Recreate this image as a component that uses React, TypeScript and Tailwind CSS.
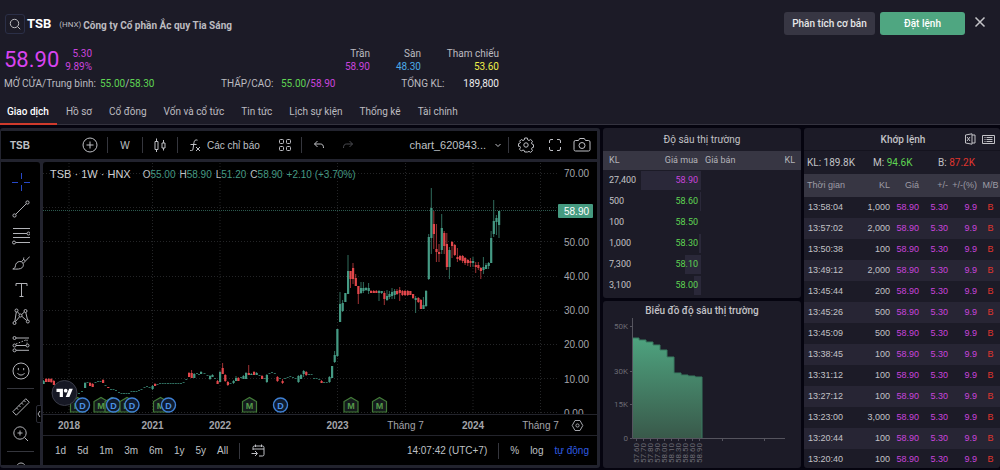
import type { ReactNode } from 'react';

interface Bid {
  volume: string;
  price: string;
  color: string;
  share: number;
}

interface Trade {
  time: string;
  volume: string;
}

// x, high, body top, body bottom, low, 1 = up / 0 = down (plot coordinates)
type Candle = [number, number, number, number, number, 0 | 1];

const tabs = ['Giao dịch', 'Hồ sơ', 'Cổ đông', 'Vốn và cổ tức', 'Tin tức', 'Lịch sự kiện', 'Thống kê', 'Tài chính'];
const ranges = ['1d', '5d', '1m', '3m', '6m', '1y', '5y', 'All'];

const bids: Bid[] = [
  { volume: '27,400', price: '58.90', color: 'text-[#c944dc]', share: 100 },
  { volume: '500', price: '58.60', color: 'text-[#5fd453]', share: 2 },
  { volume: '100', price: '58.50', color: 'text-[#5fd453]', share: 0 },
  { volume: '1,000', price: '58.30', color: 'text-[#5fd453]', share: 4 },
  { volume: '7,300', price: '58.10', color: 'text-[#5fd453]', share: 27 },
  { volume: '3,100', price: '58.00', color: 'text-[#5fd453]', share: 11 },
];

const trades: Trade[] = [
  { time: '13:58:04', volume: '1,000' },
  { time: '13:57:02', volume: '2,000' },
  { time: '13:50:38', volume: '100' },
  { time: '13:49:12', volume: '2,000' },
  { time: '13:45:44', volume: '200' },
  { time: '13:45:26', volume: '500' },
  { time: '13:45:09', volume: '500' },
  { time: '13:38:45', volume: '100' },
  { time: '13:31:12', volume: '100' },
  { time: '13:27:12', volume: '100' },
  { time: '13:23:00', volume: '3,000' },
  { time: '13:20:44', volume: '100' },
  { time: '13:20:40', volume: '100' },
];

const candles: Candle[] = [
  [43.5, 380, 381, 384, 384, 1], [46, 378, 379, 382, 382, 0], [48.6, 378, 379, 382, 382, 0], [51.2, 378, 379, 382, 383, 0],
  [53.8, 380, 381, 385, 385, 0], [85, 382, 383, 388, 388, 1], [90, 382, 383, 386, 386, 0], [92.6, 383, 384, 387, 387, 0],
  [103, 379, 380, 383, 383, 0], [108.2, 387, 387, 388, 388, 0], [152.5, 385, 386, 389, 390, 1], [155, 383, 384, 386, 386, 0],
  [189, 372, 373, 377, 377, 0], [191.6, 370, 373, 378, 378, 0], [194.2, 373, 374, 378, 378, 1], [201, 371, 372, 374, 374, 1],
  [210, 375, 376, 379, 380, 1], [212.4, 374, 375, 377, 377, 1], [217.5, 380, 381, 384, 384, 0], [220, 371, 372, 382, 382, 1],
  [222.6, 363, 368, 374, 374, 0], [225.2, 374, 375, 381, 382, 0], [227.8, 381, 382, 385, 386, 0], [233.5, 380, 381, 383, 384, 1],
  [236, 376, 378, 381, 381, 1], [238.3, 377, 378, 381, 381, 0], [243.4, 375, 376, 379, 379, 1], [246, 372, 373, 379, 379, 1],
  [248.7, 365, 373, 375, 375, 0], [251.3, 373, 374, 375, 375, 1], [254, 371, 372, 375, 375, 0], [256.6, 372, 373, 375, 375, 1],
  [262, 375, 376, 379, 379, 0], [266.8, 374, 375, 382, 383, 1], [277.4, 376, 377, 381, 382, 0], [282.5, 379, 381, 383, 384, 0],
  [298.4, 375, 376, 382, 383, 1], [301, 374, 375, 379, 379, 1], [303.6, 370, 371, 374, 377, 1], [306.2, 371, 372, 375, 376, 0],
  [321.5, 380, 381, 383, 383, 0], [329.4, 376, 377, 382, 383, 1], [332, 366, 366, 378, 378, 1], [334.6, 351, 355, 362, 363, 1],
  [337.3, 329, 329, 356, 357, 1], [340, 292, 304, 322, 322, 1], [342.6, 300, 303, 311, 312, 1], [345.3, 293, 293, 302, 302, 1],
  [348, 255, 271, 294, 294, 1], [350.5, 271, 271, 279, 288, 0], [353, 263, 268, 279, 284, 0], [355.7, 274, 278, 286, 286, 0],
  [358.3, 286, 286, 294, 304, 0], [361, 282, 288, 293, 294, 1], [363.4, 282, 288, 291, 293, 1], [366, 287, 288, 290, 291, 1],
  [368.6, 283, 288, 291, 294, 1], [371, 290, 291, 293, 293, 0], [373.7, 290, 291, 293, 293, 0], [376.3, 290, 291, 293, 293, 0],
  [379, 290, 291, 293, 301, 1], [381.6, 291, 291, 293, 294, 1], [384.3, 291, 293, 299, 305, 0], [387, 290, 296, 300, 301, 1],
  [389.4, 291, 294, 297, 299, 1], [392, 288, 292, 296, 299, 1], [394.6, 289, 291, 295, 299, 1], [397, 289, 291, 294, 295, 0],
  [399.7, 287, 290, 293, 301, 0], [402.4, 290, 291, 295, 296, 0], [405, 290, 291, 295, 296, 0], [407.7, 290, 291, 295, 296, 0],
  [410.3, 291, 291, 295, 295, 0], [413, 294, 294, 298, 299, 0], [415.6, 296, 298, 300, 313, 1], [418.3, 297, 298, 302, 303, 0],
  [420.8, 299, 300, 309, 309, 0], [423.4, 297, 305, 309, 309, 1], [426, 290, 291, 306, 307, 1], [428.7, 234, 237, 279, 280, 1],
  [431.3, 188, 208, 238, 254, 1], [433.8, 211, 224, 234, 249, 0], [436.4, 224, 249, 252, 262, 0], [439, 244, 252, 254, 262, 0],
  [441.7, 214, 228, 250, 254, 1], [444.2, 231, 233, 246, 254, 0], [446.8, 233, 244, 267, 270, 0], [449.4, 247, 250, 267, 279, 1],
  [452, 241, 242, 246, 258, 0], [454.7, 244, 245, 255, 256, 0], [457.4, 248, 257, 259, 262, 0], [460, 255, 256, 260, 261, 0],
  [462.6, 255, 256, 261, 263, 0], [465.1, 257, 258, 263, 265, 0], [467.8, 259, 260, 263, 266, 0], [470.4, 258, 261, 263, 267, 0],
  [473, 257, 261, 263, 267, 1], [475.7, 262, 265, 267, 273, 0], [478.3, 262, 265, 268, 270, 0], [480.8, 267, 268, 271, 279, 0],
  [483.4, 257, 267, 270, 274, 1], [486, 263, 265, 269, 269, 1], [488.6, 262, 263, 266, 269, 1], [491.1, 231, 238, 263, 263, 1],
  [493.7, 200, 221, 234, 237, 1], [496.4, 215, 218, 222, 235, 1], [499, 211, 211, 225, 238, 1],
];

// quiet weeks, drawn as short dashes
const quiet = [
  [79, 393], [82, 391], [87.5, 382], [95.5, 382], [98, 381], [100.5, 381], [105.5, 385], [111, 389], [113.5, 389], [116, 390],
  [119, 392], [121.5, 393], [124, 393], [126.5, 393], [129, 393], [131.5, 391], [134, 391], [136.5, 391], [139, 390], [141.5, 389],
  [144.5, 387], [147, 386], [149.5, 387], [157.5, 384], [160, 383], [162.7, 383], [165.3, 383], [168, 383], [170.6, 383],
  [173.2, 383], [175.8, 383], [178.4, 383], [181, 383], [183.6, 382], [186.3, 379], [197, 373], [199, 374], [204.5, 373],
  [207.5, 375], [215, 378], [230.5, 383], [241, 377], [259.5, 375], [264.5, 378], [269.5, 373], [272, 372], [274.8, 373],
  [280, 378], [285, 378], [287.7, 377], [290.3, 376], [293, 377], [295.6, 378], [309, 374], [311.6, 374], [314, 378],
  [316.6, 378], [319.3, 379], [324, 382], [326.7, 382],
];

const gridX = [69, 152.5, 220, 337.5, 405.5, 473, 540.5];
const gridY = [173, 207, 241.5, 276, 310, 344, 378.5, 412.5];
const priceLabels = ['70.00', '', '50.00', '40.00', '30.00', '20.00', '10.00', '0.00'];
const timeLabels = ['2018', '2021', '2022', '2023', 'Tháng 7', '2024', 'Tháng 7'];

const events: [string, number][] = [
  ['M', 77.5], ['D', 82.5], ['M', 101], ['M', 112], ['D', 113.5], ['M', 127], ['D', 132],
  ['M', 160.5], ['D', 168.5], ['M', 249.5], ['D', 280.5], ['M', 351], ['M', 379.5],
];

const depthSteps = [338, 340, 342, 345, 350, 357, 373, 375, 376, 377];
const depthPrices = ['57.60', '57.70', '57.80', '57.90', '58.00', '58.10', '58.30', '58.50', '58.60', '58.90'];

function Icon({ children, size = 18, className = '' }: { children: ReactNode; size?: number; className?: string }) {
  return (
    <svg width={size} height={size} viewBox={`0 0 ${size} ${size}`} fill="none" stroke="currentColor" strokeWidth="1" className={className} aria-hidden="true">
      {children}
    </svg>
  );
}

function Separator() {
  return <span className="h-4 w-px shrink-0 bg-[#35363d]" />;
}

function Header() {
  return (
    <header className="shrink-0 border-b border-[#34333f] bg-[#1c1b27] text-[10px] text-[#bcbcc0]">
      <div className="flex items-start pt-3 pr-[10px]">
        <div className="flex items-center pt-[2px] pl-[5px]">
          <button aria-label="Tìm kiếm" className="flex size-5 items-center justify-center rounded-[3px] border border-[#2b2f47]">
            <Icon size={12}>
              <circle cx="5.5" cy="5.5" r="4.2" />
              <path d="M8.6 8.6 11.2 11.2" />
            </Icon>
          </button>
          <h1 className="ml-[2px] text-[13px] leading-5 font-bold text-white">TSB</h1>
          <span className="mt-[2px] ml-2 text-[8px]">(HNX)</span>
          <span className="mt-[2px] ml-[2px] font-bold">Công ty Cổ phần Ắc quy Tia Sáng</span>
        </div>
        <div className="ml-auto flex items-start gap-[5px] font-medium text-white">
          <button className="h-[23px] w-[91px] rounded-[3px] bg-[#373643] text-[#e6e6e8]">Phân tích cơ bản</button>
          <button className="h-[23px] w-[85px] rounded-[3px] bg-[#4fa681]">Đặt lệnh</button>
          <button aria-label="Đóng" className="flex size-5 items-center justify-center text-[#c4c4c8]">
            <Icon size={12}>
              <path d="m1.5 1.5 9 9m0-9-9 9" strokeWidth="1.5" />
            </Icon>
          </button>
        </div>
      </div>

      <div className="mt-3 flex w-[499px] items-center pl-1">
        <span className="w-[56px] text-[22px] leading-[26px] text-[#d944f0]">58.90</span>
        <div className="w-8 text-right leading-[13px] text-[#c944dc]">
          <div>5.30</div>
          <div>9.89%</div>
        </div>
        <dl className="ml-auto flex text-right leading-[13px]">
          <div>
            <dt>Trần</dt>
            <dd className="text-[#c944dc]">58.90</dd>
          </div>
          <div className="w-[51px]">
            <dt>Sàn</dt>
            <dd className="text-[#4ba9e6]">48.30</dd>
          </div>
          <div className="w-[78px]">
            <dt>Tham chiếu</dt>
            <dd className="text-[#eeee48]">53.60</dd>
          </div>
        </dl>
      </div>

      <div className="mt-1 flex w-[499px] pl-1 leading-[13px]">
        <span className="w-24">MỞ CỬA/Trung bình:</span>
        <span className="w-[121px]">
          <span className="text-[#5fd453]">55.00</span>/<span className="text-[#5fd453]">58.30</span>
        </span>
        <span className="w-[60px]">THẤP/CAO:</span>
        <span>
          <span className="text-[#5fd453]">55.00</span>/<span className="text-[#c944dc]">58.90</span>
        </span>
        <span className="ml-auto w-[62px]">TỔNG KL:</span>
        <span className="text-right text-[#ececee]">189,800</span>
      </div>

      <nav className="mt-[9px] flex">
        {tabs.map((tab, i) => (
          <a
            key={tab}
            href="#"
            className={
              i === 0
                ? '-mb-px border-b-2 border-[#cf3a2c] pt-[6px] pr-2 pb-1 pl-[7px] leading-[14px] font-medium text-white'
                : 'pt-[6px] pr-2 pb-1 pl-[9px] leading-[14px]'
            }
          >
            {tab}
          </a>
        ))}
      </nav>
    </header>
  );
}

function ChartToolbar() {
  return (
    <div className="flex h-7 shrink-0 items-center bg-black text-[10px]">
      <button className="w-[71px] pl-[9px] text-left font-bold">TSB</button>
      <button aria-label="So sánh" className="flex w-[35px] justify-center">
        <Icon size={16}>
          <circle cx="8" cy="8" r="7" />
          <path d="M8 4.500v7M4.500 8h7" />
        </Icon>
      </button>
      <Separator />
      <button className="w-[34px] text-center">W</button>
      <Separator />
      <button aria-label="Kiểu nến" className="flex w-[34px] justify-center">
        <Icon size={14}>
          <path d="M2 3.500h3v8H2zM3.500 0.500v3M3.500 11.500v2.500M9 5h3v5H9zM10.500 2v3M10.500 10v2.500" />
        </Icon>
      </button>
      <Separator />
      <button className="flex w-[91px] items-center gap-[6px] pl-[11px]">
        <Icon size={12}>
          <path d="M8.500 1.200C6.500.3 5.300 1.500 5 3.500L4 10c-.3 1.800-1.300 2.300-3 1.500M1.500 5.500h6M7 8l4 4M11 8l-4 4" />
        </Icon>
        Các chỉ báo
      </button>
      <button aria-label="Mẫu" className="flex w-8 justify-center">
        <Icon size={14}>
          <rect x="1.500" y="1.500" width="4" height="4" rx="1" />
          <rect x="8.500" y="1.500" width="4" height="4" rx="1" />
          <rect x="1.500" y="8.500" width="4" height="4" rx="1" />
          <rect x="8.500" y="8.500" width="4" height="4" rx="1" />
        </Icon>
      </button>
      <Separator />
      <button aria-label="Hoàn tác" className="flex w-[34px] justify-center">
        <Icon size={12}>
          <path d="M4.500 2 1.500 5l3 3M1.500 5h6c2.200 0 3 1.500 3 4" />
        </Icon>
      </button>
      <button aria-label="Làm lại" className="flex w-6 justify-center text-[#4a4b50]">
        <Icon size={12}>
          <path d="m7.500 2 3 3-3 3M10.500 5h-6c-2.200 0-3 1.500-3 4" />
        </Icon>
      </button>
      <button className="mr-[6px] ml-auto flex items-center gap-2 text-[11px]">
        chart_620843...
        <Icon size={8}>
          <path d="m1.500 3 2.500 2.500L6.500 3" />
        </Icon>
      </button>
      <Separator />
      <button aria-label="Cài đặt" className="flex w-[34px] justify-center">
        <Icon size={16}>
          <path d="M6.700 1h2.600l.4 1.900 1.300.6 1.700-1 1.800 1.800-1 1.700.6 1.200 1.400.5v2.600l-1.400.4-.6 1.200 1 1.700-1.800 1.800-1.700-1-1.300.6L9.300 15H6.700l-.4-1.400-1.300-.6-1.700 1-1.800-1.800 1-1.700-.6-1.200L.5 9.300V6.700L1.900 6.200l.6-1.200-1-.7 1.800-1.800 1.700 1 1.300-.6z" strokeLinejoin="round" />
          <circle cx="8" cy="8" r="2.200" />
        </Icon>
      </button>
      <button aria-label="Toàn màn hình" className="flex w-6 justify-center">
        <Icon size={14}>
          <path d="M1.500 5V3q0-1.500 1.500-1.500H5M9 1.500h2q1.500 0 1.500 1.500v2M12.500 9v2q0 1.500-1.500 1.500H9M5 12.500H3Q1.500 12.500 1.500 11V9" />
        </Icon>
      </button>
      <button aria-label="Chụp ảnh" className="flex w-[30px] justify-center">
        <Icon size={18}>
          <path d="M2.500 4.500h3l1.200-2h4.600l1.200 2h3q1.500 0 1.500 1.500v7.500q0 1.500-1.500 1.500h-13Q1 15 1 13.500V6q0-1.500 1.500-1.500z" />
          <circle cx="9" cy="9.500" r="3" />
        </Icon>
      </button>
    </div>
  );
}

function Tool({ label, children, className = '' }: { label: string; children: ReactNode; className?: string }) {
  return (
    <button aria-label={label} className={`flex h-[27px] w-full shrink-0 items-center justify-center ${className}`}>
      <Icon>{children}</Icon>
    </button>
  );
}

function DrawingTools() {
  return (
    <div className="relative w-[39px] shrink-0">
      <div className="flex h-full flex-col overflow-hidden rounded-tr-[3px] bg-black pt-[6px] text-[#b2b3b8]">
        <Tool label="Con trỏ" className="text-[#2748c8]">
          <path d="M9.500 0v6M9.500 12v6M0 9.500h6M12 9.500h6" />
        </Tool>
        <Tool label="Đường xu hướng">
          <circle cx="2.500" cy="15.500" r="1.600" />
          <circle cx="15.500" cy="2.500" r="1.600" />
          <path d="M3.700 14.300 14.300 3.700" />
        </Tool>
        <Tool label="Fibonacci">
          <path d="M1 1.500h17M1 6.500h14M1 10.500h17M4 15.500h14" />
          <circle cx="16.500" cy="6.500" r="1.500" />
          <circle cx="2" cy="15.500" r="1.500" />
        </Tool>
        <Tool label="Cọ vẽ">
          <path d="M.8 15c3-.8 2.200-2.600 3-4.800.8-2 3.500-3.400 5.700-2.400 2.300 1.200 2.400 4 .8 5.700-1.800 1.900-5.500 1.700-9.500 1.500zM9.500 7.800 12 5M11 9.500l6.800-7M11.800 3.500c-.5 1.200-.2 2.400 1.400 3.400" />
        </Tool>
        <Tool label="Văn bản">
          <path d="M4 5V2.500h11V5M9.500 2.500v13M7.500 15.500h4" />
        </Tool>
        <Tool label="Mẫu hình">
          <circle cx="4.500" cy="2.500" r="1.500" />
          <circle cx="13.500" cy="3" r="1.500" />
          <circle cx="8.500" cy="7.500" r="1.500" />
          <circle cx="2.500" cy="15" r="1.500" />
          <circle cx="15.800" cy="13.500" r="1.500" />
          <path d="M4.300 4 2.800 13.500M5.400 3.700 7.600 6.300M12.400 4 9.600 6.600M13.800 4.500l1.700 7.500M7.600 8.700l-4.200 5M9.800 8.300l4.800 4.200" />
        </Tool>
        <Tool label="Dự báo">
          <circle cx="2.500" cy="3" r="1.500" />
          <circle cx="2.500" cy="10.500" r="1.500" />
          <circle cx="15.500" cy="10.500" r="1.500" />
          <circle cx="2.500" cy="15.300" r="1.500" />
          <path d="M4 3h13M4 10.500h10M4 15.300h13" />
          <path d="M4 9l11-4.500v4" strokeDasharray="1.500 1.500" />
        </Tool>
        <Tool label="Biểu tượng">
          <circle cx="9" cy="9" r="8" />
          <path d="M6.300 6v2.200M11.700 6v2.200M5.500 11.300c1.800 2.300 5.200 2.300 7 0" />
        </Tool>
        <span className="mx-[6px] my-1 h-px shrink-0 bg-[#35363d]" />
        <Tool label="Thước đo">
          <path d="m.8 13.700 13-13 3.500 3.500-13 13zM4.500 10l1.600 1.600M7 7.500l1.600 1.600M9.500 5l1.600 1.600M12 2.500l1.600 1.600" />
        </Tool>
        <Tool label="Phóng to">
          <circle cx="8" cy="8" r="6.200" />
          <path d="m12.500 12.500 3.500 3.500M8 5.500v5M5.500 8h5" />
        </Tool>
        <span className="mx-[6px] my-1 h-px shrink-0 bg-[#35363d]" />
        <Tool label="Nam châm">
          <path d="M4 8c0-3.500 2.200-6 5-6s5 2.500 5 6v7h-3V8c0-3-4-3-4 0v7H4z" />
        </Tool>
      </div>
      <button aria-label="Thu gọn" className="absolute top-[243px] -right-[2px] flex h-[18px] w-[6px] items-center justify-center rounded-l-[2px] border border-[#2b2c36] bg-black">
        <svg width="4" height="8" viewBox="0 0 4 8" fill="none" stroke="#b2b3b8" className="shrink-0">
          <path d="M3 1 1 4l2 3" />
        </svg>
      </button>
    </div>
  );
}

function EventMark({ kind, x }: { kind: string; x: number }) {
  const isDividend = kind === 'D';
  return (
    <g transform={`translate(${x} 405)`}>
      {isDividend ? (
        <circle r="7" fill="#0f1a2c" stroke="#3f80d4" strokeWidth="1.400" />
      ) : (
        <path d="M-7 7v-10.500L0-7.500l7 4V7z" fill="#141a1c" stroke="#437c38" strokeWidth="1.200" />
      )}
      <text y="3.500" textAnchor="middle" fontSize="9" fontWeight="bold" fill={isDividend ? '#4a90e6' : '#54994a'}>
        {kind}
      </text>
    </g>
  );
}

function PriceChart() {
  return (
    <svg viewBox="43 162 554 274" preserveAspectRatio="xMinYMin" className="min-h-0 w-full flex-1" fontSize="10" fill="#a3a4aa">
      <g stroke="#242527" strokeDasharray="1 2">
        {gridX.map((x) => (
          <path key={x} d={`M${x} 163V414`} />
        ))}
        {gridY.map((y) => (
          <path key={y} d={`M43 ${Math.floor(y) + 0.5}H557`} />
        ))}
      </g>
      <path d="M43 210.500H557" stroke="#2c5a4f" strokeDasharray="1 1" />

      {quiet.map(([x, y]) => (
        <rect key={x} x={x - 1} y={y} width="2" height="1" fill="#2f6f60" />
      ))}
      {candles.map(([x, high, top, bottom, low, up]) => (
        <g key={x} fill={up ? '#459a84' : '#e2474b'}>
          <rect x={x - 0.5} y={high} width="1" height={low - high} opacity="0.7" />
          <rect x={x - 1} y={top} width="2.200" height={bottom - top} />
        </g>
      ))}

      {priceLabels.map((label, i) => (
        <text key={i} x="564" y={gridY[i] + 4}>
          {label}
        </text>
      ))}
      <rect x="558" y="204" width="35" height="14" rx="1" fill="#459a80" />
      <text x="564" y="215" fill="#ffffff">
        58.90
      </text>

      {events.map(([kind, x]) => (
        <EventMark key={kind + x} kind={kind} x={x} />
      ))}
      <circle cx="64.500" cy="393" r="12.500" fill="#161824" stroke="#3a3c48" />
      <g transform="translate(56.500 387) scale(.46)" fill="#ffffff">
        <path d="M14 22H7V11H0V4h14v18zM28 22h-8l7.500-18h8L28 22z" />
        <circle cx="20" cy="8" r="4" />
      </g>

      <rect x="43" y="414" width="554" height="22" fill="#000000" />
      <path d="M43 414.500H597M43 435.500H597" stroke="#23242c" />
      {timeLabels.map((label, i) => (
        <text key={i} x={gridX[i]} y="429" textAnchor="middle" fontWeight={label.startsWith('20') ? 'bold' : 'normal'}>
          {label}
        </text>
      ))}
      <path d="m575 420.500h5l2.800 5-2.800 5h-5l-2.800-5z" fill="none" stroke="#a3a4aa" />
      <circle cx="577.500" cy="425.500" r="1.600" fill="none" stroke="#a3a4aa" />
    </svg>
  );
}

function RangeBar() {
  return (
    <div className="flex h-[29px] shrink-0 items-center gap-[11px] pr-2 pl-3 text-[10px] whitespace-nowrap">
      {ranges.map((range) => (
        <button key={range}>{range}</button>
      ))}
      <Separator />
      <button aria-label="Đi đến ngày">
        <Icon size={14}>
          <path d="M2 6V3.500Q2 2 3.500 2h8Q13 2 13 3.500v7q0 1.500-1.500 1.500H8M2 5h11M4.500.5V3M10.500.5V3M.5 9.500H6M4 7l2.500 2.500L4 12" />
        </Icon>
      </button>
      <span className="ml-auto">14:07:42 (UTC+7)</span>
      <Separator />
      <button>%</button>
      <button>log</button>
      <button className="text-[#2f5be0]">tự động</button>
    </div>
  );
}

function ChartPanel() {
  return (
    <section className="flex min-h-0 flex-col gap-[3px] rounded-[3px] bg-[#22232e] py-[3px] pr-[3px] pl-px font-['Liberation_Sans',Arial,sans-serif] text-[#bfc0c5]">
      <ChartToolbar />
      <div className="flex min-h-0 flex-1 gap-[3px]">
        <DrawingTools />
        <div className="relative flex min-w-0 flex-1 flex-col rounded-tl-[3px] bg-black">
          <div className="absolute top-1 left-[7px] flex items-baseline gap-1 text-[10px] whitespace-nowrap text-[#459a84]">
            <h2 className="mr-2 text-[11px] leading-4 text-[#cfd0d4]">TSB · 1W · HNX</h2>
            <span><span className="text-[#bfc0c5]">O</span>55.00</span>
            <span><span className="text-[#bfc0c5]">H</span>58.90</span>
            <span><span className="text-[#bfc0c5]">L</span>51.20</span>
            <span><span className="text-[#bfc0c5]">C</span>58.90</span>
            <span>+2.10 (+3.70%)</span>
          </div>
          <PriceChart />
          <RangeBar />
        </div>
      </div>
    </section>
  );
}

function DepthTable() {
  return (
    <section className="rounded-[3px] bg-[#1c1b27] pb-[2px]">
      <h2 className="h-[23px] text-center text-[10px] leading-[23px]">Độ sâu thị trường</h2>
      <table className="w-full table-fixed text-[9px]">
        <thead>
          <tr className="h-[19px] bg-[#373643] text-[#b4b4ba]">
            <th className="w-[38px] pl-[6px] text-left font-normal">KL</th>
            <th className="w-[60px] pr-[3px] text-right font-normal">Giá mua</th>
            <th className="pl-1 text-left font-normal">Giá bán</th>
            <th className="w-10 pr-[6px] text-right font-normal">KL</th>
          </tr>
        </thead>
        <tbody>
          {bids.map((bid) => (
            <tr key={bid.price} className="h-[21px]">
              <td className="pl-[6px]">{bid.volume}</td>
              <td className="relative pr-[3px] text-right">
                <span className="absolute inset-y-px right-0 bg-[#2a2839]" style={{ width: `${bid.share}%` }} />
                <span className={`relative ${bid.color}`}>{bid.price}</span>
              </td>
              <td />
              <td />
            </tr>
          ))}
        </tbody>
      </table>
    </section>
  );
}

function DepthChart() {
  const outline = depthSteps.map((y, i) => `V${y}H${632 + (i + 1) * 7}`).join('');
  return (
    <section className="flex min-h-0 flex-1 flex-col rounded-[3px] bg-[#1c1b27]">
      <h2 className="pt-[3px] text-center text-[10px] leading-[14px] font-medium">Biểu đồ độ sâu thị trường</h2>
      <svg viewBox="603 318 198 150" preserveAspectRatio="xMinYMin" className="min-h-0 w-full flex-1" fontSize="8" fill="#6b6a73">
        <defs>
          <linearGradient id="depth" x1="0" y1="0" x2="0" y2="1">
            <stop offset="0" stopColor="#4ea37f" />
            <stop offset="1" stopColor="#39594a" />
          </linearGradient>
        </defs>
        <path d={`M632 438${outline}V438z`} fill="url(#depth)" />
        <path d={`M632 338${outline}V438`} fill="none" stroke="#387a60" />
        <g fill="none" stroke="#55545e">
          <path d="M632.500 318V438.500H785M630 326.500h2M630 371.500h2M630 404.500h2M630 438.500h2M722.500 438v3M764.500 438v3" />
          {depthPrices.map((price, i) => (
            <path key={price} d={`M${636.5 + i * 7} 438v3`} />
          ))}
        </g>
        <g textAnchor="end">
          <text x="628" y="329">50K</text>
          <text x="628" y="374">30K</text>
          <text x="628" y="407">15K</text>
          <text x="628" y="441">0</text>
          {depthPrices.map((price, i) => (
            <text key={price} transform={`translate(${639 + i * 7} 443) rotate(-90)`}>
              {price}
            </text>
          ))}
        </g>
      </svg>
    </section>
  );
}

function TradesPanel() {
  return (
    <section className="min-h-0 overflow-hidden rounded-[3px] bg-[#1c1b27]">
      <div className="flex h-[23px] items-center justify-end border-b border-[#14131e] pr-[5px]">
        <h2 className="flex-1 pl-[38px] text-center text-[10px] font-medium">Khớp lệnh</h2>
        <button aria-label="Xuất Excel" className="mr-[6px]">
          <Icon size={12}>
            <path d="M1.500 2 8 .8v10.400L1.500 10zM8 2h3v8H8M3 4l3 4M6 4 3 8" />
          </Icon>
        </button>
        <button aria-label="Danh sách">
          <Icon size={13}>
            <path d="M.5 2.500h12v8H.5zM2.500 4.500h1M4.500 4.500h6M2.500 6.500h1M4.500 6.500h6M2.500 8.500h1M4.500 8.500h6" />
          </Icon>
        </button>
      </div>
      <div className="flex h-[23px] items-center pl-[3px] text-[10px]">
        <span className="w-[66px]">KL: 189.8K</span>
        <span className="w-[65px]">M: <span className="text-[#5fd453]">94.6K</span></span>
        <span>B: <span className="text-[#e0352e]">87.2K</span></span>
      </div>
      <table className="w-full table-fixed font-['Liberation_Sans',Arial,sans-serif] text-[9px]">
        <thead>
          <tr className="h-[23px] bg-[#373643] text-[#9d9ca5]">
            <th className="pl-[3px] text-left font-normal">Thời gian</th>
            <th className="w-[33px] text-right font-normal">KL</th>
            <th className="w-[29px] text-right font-normal">Giá</th>
            <th className="w-[29px] text-right font-normal">+/-</th>
            <th className="w-[29px] text-right font-normal whitespace-nowrap">+/-(%)</th>
            <th className="w-[23px] pl-1 text-center font-normal">M/B</th>
          </tr>
        </thead>
        <tbody>
          {trades.map((trade) => (
            <tr key={trade.time} className="h-[21px] text-right text-[#c944dc] even:bg-[#272534]">
              <td className="pl-1 text-left text-[#c2c2c6]">{trade.time}</td>
              <td className="text-[#c2c2c6]">{trade.volume}</td>
              <td>58.90</td>
              <td>5.30</td>
              <td>9.9</td>
              <td className="pl-1 text-center text-[#e0352e]">B</td>
            </tr>
          ))}
        </tbody>
      </table>
    </section>
  );
}

export default function App() {
  return (
    <div className="flex h-screen flex-col overflow-hidden bg-[#05040f] font-[Roboto,sans-serif] text-[#c2c2c6]">
      <Header />
      <main className="grid min-h-0 flex-1 grid-cols-[minmax(0,1fr)_198px_196px] grid-rows-[minmax(0,1fr)] gap-[3px] pt-[3px] pb-[2px]">
        <ChartPanel />
        <div className="flex min-h-0 flex-col gap-[3px]">
          <DepthTable />
          <DepthChart />
        </div>
        <TradesPanel />
      </main>
    </div>
  );
}
